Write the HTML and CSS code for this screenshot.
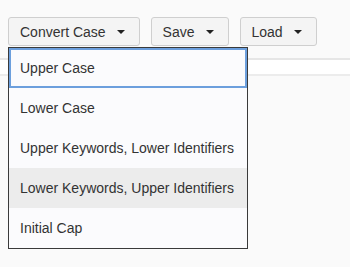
FILE: index.html
```html
<!DOCTYPE html>
<html lang="en">
<head>
  <meta charset="UTF-8" />
  <title>Convert Case</title>
  <link rel="stylesheet" href="styles.css">
</head>
<body>

  <div class="toolbar">
    <div class="dropdown">
      <button class="btn">Convert Case <span class="caret"></span></button>
      <ul class="menu">
        <li class="menu-item focused">Upper Case</li>
        <li class="menu-item">Lower Case</li>
        <li class="menu-item">Upper Keywords, Lower Identifiers</li>
        <li class="menu-item hover">Lower Keywords, Upper Identifiers</li>
        <li class="menu-item">Initial Cap</li>
      </ul>
    </div>
    <button class="btn">Save <span class="caret"></span></button>
    <button class="btn">Load <span class="caret"></span></button>
  </div>

  <div class="strip"></div>

</body>
</html>
```

FILE: styles.css
```css
html, body {
  min-height: 100vh;
}

body {
  margin: 0;
  background-color: #fafafa;
  font-family: 'Liberation Sans', Arial, sans-serif;
  color: #333;
}

.toolbar {
  display: flex;
  gap: 11px;
  padding: 17px 8px 0;
}

.dropdown {
  position: relative;
}

.btn {
  display: flex;
  align-items: center;
  gap: 11px;
  height: 29px;
  padding: 1px 14px 0 11px;
  border: 1px solid #cfcfcf;
  border-radius: 3px;
  background-color: #f4f4f4;
  color: #333;
  font-family: inherit;
  font-size: 14px;
}

.caret {
  width: 0;
  height: 0;
  border-left: 4px solid transparent;
  border-right: 4px solid transparent;
  border-top: 4px solid #222;
}

.strip {
  margin-top: 12px;
  height: 14px;
  border-top: 2px solid #e6e6e6;
  border-bottom: 2px solid #ececec;
  background-color: #fff;
}

.menu {
  position: absolute;
  top: 30px;
  left: 0;
  width: 238px;
  margin: 0;
  padding: 0;
  list-style: none;
  border: 1px solid #3a3a3a;
  background-color: #fbfbfd;
  z-index: 2;
}

.menu-item {
  height: 40px;
  line-height: 40px;
  padding: 0 11px;
  font-size: 14px;
  color: #333;
  white-space: nowrap;
}

.menu-item.focused {
  outline: 2px solid #6c9fdd;
  outline-offset: -2px;
}

.menu-item.hover {
  background-color: #ececec;
}
```
